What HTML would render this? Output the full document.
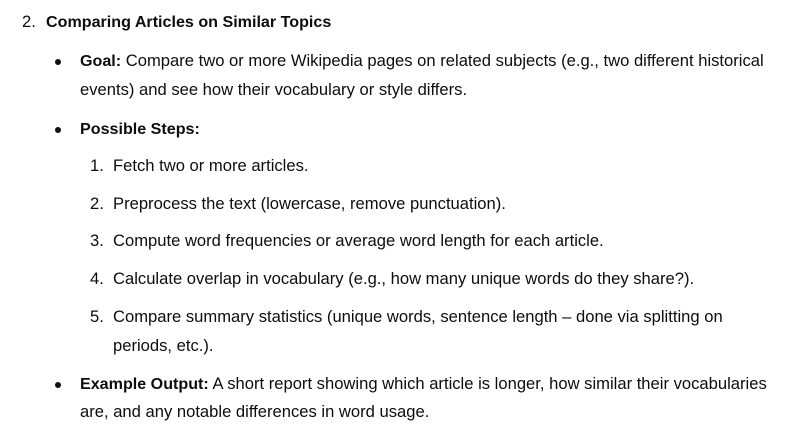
<!DOCTYPE html>
<html><head><meta charset="utf-8"><style>
body{margin:0;width:797px;height:428px;background:#fff;position:relative;overflow:hidden;font-family:"Liberation Sans",sans-serif;font-size:16.6px;color:#0d0d0d}
div{position:absolute;white-space:nowrap;line-height:20px}
b{font-weight:bold}
.h{font-size:16.1px}
.d{position:absolute;width:6px;height:6px;border-radius:50%;background:#0d0d0d}
</style></head><body>
<div style="left:22px;top:12px">2.</div>
<div class="h" style="left:46px;top:12px"><b>Comparing Articles on Similar Topics</b></div>
<span class="d" style="left:55px;top:59px"></span>
<div style="left:80px;top:51px"><b class="h">Goal:</b> Compare two or more Wikipedia pages on related subjects (e.g., two different historical</div>
<div style="left:80px;top:80px">events) and see how their vocabulary or style differs.</div>
<span class="d" style="left:55px;top:127px"></span>
<div style="left:80px;top:119px"><b class="h">Possible Steps:</b></div>
<div style="left:90px;top:156px">1.</div><div style="left:113px;top:156px">Fetch two or more articles.</div>
<div style="left:90px;top:194px">2.</div><div style="left:113px;top:194px">Preprocess the text (lowercase, remove punctuation).</div>
<div style="left:90px;top:231px">3.</div><div style="left:113px;top:231px">Compute word frequencies or average word length for each article.</div>
<div style="left:90px;top:269px">4.</div><div style="left:113px;top:269px">Calculate overlap in vocabulary (e.g., how many unique words do they share?).</div>
<div style="left:90px;top:307px">5.</div><div style="left:113px;top:307px">Compare summary statistics (unique words, sentence length – done via splitting on</div>
<div style="left:113px;top:336px">periods, etc.).</div>
<span class="d" style="left:55px;top:382px"></span>
<div style="left:80px;top:374px"><b class="h">Example Output:</b> A short report showing which article is longer, how similar their vocabularies</div>
<div style="left:80px;top:402px">are, and any notable differences in word usage.</div>
</body></html>
